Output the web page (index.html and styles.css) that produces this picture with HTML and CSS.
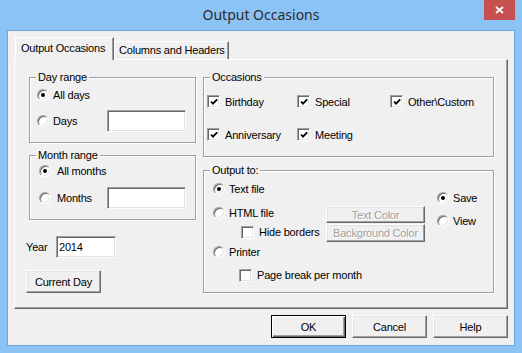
FILE: index.html
```html
<!DOCTYPE html>
<html lang="en">
<head>
    <meta charset="UTF-8">
    <title>Output Occasions</title>
    <link rel="stylesheet" href="styles.css">
</head>
<body>
    <div class="window">
        <div class="titlebar">
            <span></span>
            <div class="title">Output Occasions</div>
            <button class="close" aria-label="Close">
                <svg width="9" height="8" viewBox="0 0 9 8"><path d="M1 1 L8 7 M8 1 L1 7" stroke="#fff" stroke-width="1.7" fill="none"/></svg>
            </button>
        </div>
        <div class="client">
            <div class="tabs">
                <div class="tab active">Output Occasions</div>
                <div class="tab">Columns and Headers</div>
            </div>
            <div class="panel">
                <div class="col-left">
                    <div class="group day-range">
                        <span class="group-title">Day range</span>
                        <div class="opt tall"><span class="radio on"></span>All days</div>
                        <div class="field-row">
                            <div class="opt tall"><span class="radio"></span>Days</div>
                            <input class="field range-field" type="text">
                        </div>
                    </div>
                    <div class="group month-range">
                        <span class="group-title">Month range</span>
                        <div class="opt tall"><span class="radio on"></span>All months</div>
                        <div class="field-row">
                            <div class="opt tall"><span class="radio"></span>Months</div>
                            <input class="field range-field" type="text">
                        </div>
                    </div>
                    <div class="year-row">
                        <span class="year-label">Year</span>
                        <input class="field year-field" type="text" value="2014">
                    </div>
                    <button class="btn current-day">Current Day</button>
                </div>
                <div class="col-right">
                    <div class="group occasions">
                        <span class="group-title">Occasions</span>
                        <div class="occ-grid">
                            <div class="opt"><span class="check on"><svg width="8" height="8" viewBox="0 0 8 8"><path d="M1 3.5 L3 5.6 L7.2 1.3" stroke="#000" stroke-width="1.8" fill="none"/></svg></span>Birthday</div>
                            <div class="opt"><span class="check on"><svg width="8" height="8" viewBox="0 0 8 8"><path d="M1 3.5 L3 5.6 L7.2 1.3" stroke="#000" stroke-width="1.8" fill="none"/></svg></span>Special</div>
                            <div class="opt"><span class="check on"><svg width="8" height="8" viewBox="0 0 8 8"><path d="M1 3.5 L3 5.6 L7.2 1.3" stroke="#000" stroke-width="1.8" fill="none"/></svg></span>Other\Custom</div>
                            <div class="opt"><span class="check on"><svg width="8" height="8" viewBox="0 0 8 8"><path d="M1 3.5 L3 5.6 L7.2 1.3" stroke="#000" stroke-width="1.8" fill="none"/></svg></span>Anniversary</div>
                            <div class="opt"><span class="check on"><svg width="8" height="8" viewBox="0 0 8 8"><path d="M1 3.5 L3 5.6 L7.2 1.3" stroke="#000" stroke-width="1.8" fill="none"/></svg></span>Meeting</div>
                        </div>
                    </div>
                    <div class="group output">
                        <span class="group-title">Output to:</span>
                        <div class="out-col1">
                            <div class="opt text-file"><span class="radio on"></span>Text file</div>
                            <div class="opt html-file"><span class="radio"></span>HTML file</div>
                            <div class="opt hide-borders"><span class="check"></span>Hide borders</div>
                            <div class="opt printer"><span class="radio"></span>Printer</div>
                            <div class="opt page-break"><span class="check"></span>Page break per month</div>
                        </div>
                        <div class="out-col2">
                            <button class="btn small" disabled>Text Color</button>
                            <button class="btn small bg-color" disabled>Background Color</button>
                        </div>
                        <div class="out-col3">
                            <div class="opt save"><span class="radio on"></span>Save</div>
                            <div class="opt view"><span class="radio"></span>View</div>
                        </div>
                    </div>
                </div>
            </div>
            <div class="actions">
                <button class="btn default">OK</button>
                <button class="btn">Cancel</button>
                <button class="btn">Help</button>
            </div>
        </div>
    </div>
</body>
</html>
```

FILE: styles.css
```css
body {
    margin: 0;
    font-family: "Liberation Sans", Arial, sans-serif;
    font-size: 11px;
    letter-spacing: -0.2px;
    color: #000;
    overflow: hidden;
}
.window {
    width: 522px;
    height: 353px;
    box-sizing: border-box;
    background: #8bc3f5;
    padding: 0 7px 7px;
    display: flex;
    flex-direction: column;
}
.titlebar {
    height: 30px;
    margin: 0 -7px;
    display: grid;
    grid-template-columns: 1fr auto 1fr;
}
.title {
    font-family: "Noto Sans", sans-serif;
    font-size: 14px;
    letter-spacing: 0;
    line-height: 30px;
    color: #2b2b2b;
}
.close {
    justify-self: end;
    width: 31px;
    height: 20px;
    margin-right: 7px;
    padding: 0;
    border: 0;
    background: #c75050;
    display: flex;
    align-items: center;
    justify-content: center;
}
.client {
    flex: 1;
    background: #f0f0f0;
    border: 1px solid #74a8da;
    padding: 6px 6px 0;
    display: flex;
    flex-direction: column;
}

/* tabs */
.tabs {
    height: 22px;
    display: flex;
    align-items: flex-end;
    margin-left: 1px;
}
.tab {
    box-sizing: border-box;
    height: 18px;
    padding: 2px 4px 0;
    line-height: 13px;
    border: 1px solid;
    border-color: #fff #696969 transparent #fff;
    border-bottom: 0;
    white-space: nowrap;
}
.tab.active {
    position: relative;
    z-index: 1;
    width: 99px;
    height: 23px;
    margin-bottom: -1px;
    padding: 4px 5px 0;
    background: #f0f0f0;
    box-shadow: inset -1px 0 #a0a0a0;
}
.tab + .tab {
    width: 115px;
    box-shadow: inset -1px 0 #a0a0a0;
}
.panel {
    box-sizing: border-box;
    height: 250px;
    border: 1px solid;
    border-color: #fff #696969 #696969 #fff;
    box-shadow: inset -1px -1px #a0a0a0;
    padding: 17px 13px 0 14px;
    display: grid;
    grid-template-columns: 167px 291px;
    column-gap: 7px;
    align-items: start;
}

/* group boxes */
.group {
    position: relative;
    box-sizing: border-box;
    border: 1px solid #a0a0a0;
    box-shadow: inset 1px 1px #fff, 1px 1px #fff;
}
.group-title {
    position: absolute;
    top: -7px;
    left: 6px;
    padding: 0 2px;
    line-height: 13px;
    background: #f0f0f0;
}
.col-left, .col-right {
    display: flex;
    flex-direction: column;
    align-items: flex-start;
}
.day-range {
    width: 167px;
    height: 66px;
    padding: 9px 0 0 7px;
}
.month-range {
    width: 167px;
    height: 65px;
    margin-top: 12px;
    padding: 7px 0 0 9px;
}
.month-range .radio {
    margin-right: 6px;
}
.field-row {
    display: flex;
    align-items: center;
    margin-top: 7px;
}
.month-range .field-row {
    margin-top: 8px;
}
.day-range .field-row .opt {
    width: 70px;
}
.month-range .field-row .opt {
    width: 68px;
}
.year-row {
    display: flex;
    align-items: center;
    margin: 16px 0 0 -3px;
}
.year-label {
    width: 30px;
}
.current-day {
    width: 75px;
    margin: 12px 0 0 -3px;
}

/* controls */
.opt {
    display: flex;
    align-items: center;
    line-height: 14px;
    white-space: nowrap;
}
.opt.tall {
    line-height: 16px;
}
.radio {
    position: relative;
    flex: none;
    box-sizing: border-box;
    width: 12px;
    height: 12px;
    margin-right: 4px;
    border-radius: 50%;
    background: #fff;
    border: 1px solid;
    border-color: #a0a0a0 #fff #fff #a0a0a0;
    box-shadow: inset 1px 1px #696969, inset -1px -1px #e3e3e3;
}
.radio.on::after {
    content: "";
    position: absolute;
    left: 3px;
    top: 3px;
    width: 4px;
    height: 4px;
    border-radius: 50%;
    background: #000;
}
.check {
    flex: none;
    box-sizing: border-box;
    width: 13px;
    height: 13px;
    margin-right: 5px;
    background: #fff;
    border: 1px solid;
    border-color: #a0a0a0 #fff #fff #a0a0a0;
    box-shadow: inset 1px 1px #696969, inset -1px -1px #e3e3e3;
    display: flex;
    align-items: center;
    justify-content: center;
}
.field {
    box-sizing: border-box;
    height: 22px;
    margin: 0;
    padding: 0 2px;
    font: inherit;
    letter-spacing: inherit;
    color: #000;
    background: #fff;
    border: 1px solid;
    border-color: #a0a0a0 #fff #fff #a0a0a0;
    box-shadow: inset 1px 1px #696969, inset -1px -1px #e3e3e3;
    outline: none;
}
.range-field {
    width: 79px;
}
.year-field {
    width: 60px;
}
.btn {
    box-sizing: border-box;
    width: 75px;
    height: 23px;
    padding: 0;
    font: inherit;
    letter-spacing: inherit;
    color: #000;
    background: #f0f0f0;
    border: 1px solid;
    border-color: #fff #696969 #696969 #fff;
    box-shadow: inset -1px -1px #a0a0a0, inset 1px 1px #e3e3e3;
}
.btn.default {
    border-color: #000;
    box-shadow: inset 1px 1px #fff, inset -1px -1px #696969, inset -2px -2px #a0a0a0;
}
.btn:disabled {
    color: #a0a0a0;
    text-shadow: 1px 1px #fff;
}

/* occasions */
.occasions {
    width: 291px;
    height: 80px;
    padding: 17px 0 0 3px;
}
.occ-grid {
    display: grid;
    grid-template-columns: 90px 93px auto;
    row-gap: 20px;
}
.occ-grid .opt {
    height: 13px;
}

/* output to */
.output {
    width: 291px;
    height: 123px;
    margin-top: 13px;
    padding-left: 9px;
    display: flex;
    align-items: flex-start;
}
.out-col1 {
    width: 113px;
    display: flex;
    flex-direction: column;
    align-items: flex-start;
}
.text-file { margin-top: 11px; }
.html-file { margin-top: 10px; }
.hide-borders { margin: 5px 0 0 28px; }
.printer { margin-top: 6px; }
.page-break { margin: 9px 0 0 26px; }
.out-col2 {
    width: 99px;
    padding-top: 35px;
    display: flex;
    flex-direction: column;
}
.btn.small {
    width: 99px;
    height: 17px;
}
.btn.bg-color {
    height: 18px;
    margin-top: 1px;
}
.out-col3 {
    margin-left: 12px;
}
.save { margin-top: 20px; }
.view { margin-top: 9px; }

.actions {
    display: flex;
    justify-content: flex-end;
    gap: 6px;
    margin-top: 6px;
}
```
